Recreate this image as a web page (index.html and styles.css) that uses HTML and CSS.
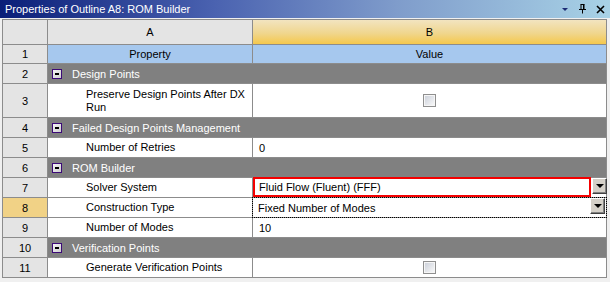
FILE: index.html
```html
<!DOCTYPE html>
<html>
<head>
<meta charset="utf-8">
<link rel="stylesheet" href="styles.css">
</head>
<body>
<div class="titlebar">
  <span class="title">Properties of Outline A8: ROM Builder</span>
  <span class="tools">
    <svg class="ic" width="8" height="6" viewBox="0 0 8 6"><polygon points="1,2 7,2 4,5" fill="#1c2c74"/></svg>
    <svg class="ic" width="9" height="10" viewBox="0 0 9 10"><path d="M2.5 0.5h4M3 0.5v5M5.5 0.5v5M6 0.5v5M1 5.5h7M4.5 5.5v4" stroke="#000" stroke-width="1" fill="none"/></svg>
    <svg class="ic" width="9" height="9" viewBox="0 0 9 9"><path d="M1 1L8 8M8 1L1 8" stroke="#000" stroke-width="1.6" fill="none"/></svg>
  </span>
</div>
<div class="grid">
  <div class="num hdr"></div>
  <div class="colhead">A</div>
  <div class="colhead sel">B</div>

  <div class="num">1</div>
  <div class="caption">Property</div>
  <div class="caption">Value</div>

  <div class="num">2</div>
  <div class="cat"><span class="tog"></span>Design Points</div>

  <div class="num tall">3</div>
  <div class="prop tall">Preserve Design Points After DX<br>Run</div>
  <div class="val center tall"><span class="chk"></span></div>

  <div class="num">4</div>
  <div class="cat"><span class="tog"></span>Failed Design Points Management</div>

  <div class="num">5</div>
  <div class="prop">Number of Retries</div>
  <div class="val">0</div>

  <div class="num">6</div>
  <div class="cat"><span class="tog"></span>ROM Builder</div>

  <div class="num">7</div>
  <div class="prop">Solver System</div>
  <div class="val combo">
    <span class="box red">Fluid Flow (Fluent) (FFF)</span>
    <span class="btn"></span>
  </div>

  <div class="num cur">8</div>
  <div class="prop">Construction Type</div>
  <div class="val combo">
    <span class="dotted"><span class="txt">Fixed Number of Modes</span><span class="btn"></span></span>
  </div>

  <div class="num">9</div>
  <div class="prop">Number of Modes</div>
  <div class="val">10</div>

  <div class="num">10</div>
  <div class="cat"><span class="tog"></span>Verification Points</div>

  <div class="num">11</div>
  <div class="prop">Generate Verification Points</div>
  <div class="val center"><span class="chk"></span></div>
</div>
</body>
</html>
```

FILE: styles.css
```css
html, body {
  margin: 0;
  padding: 0;
}
body {
  width: 610px;
  height: 282px;
  overflow: hidden;
  background: #f0f0f0;
  font-family: "Liberation Sans", Arial, sans-serif;
  font-size: 11px;
  color: #000;
}
.titlebar {
  height: 18px;
  margin-bottom: 1px;
  background: linear-gradient(to right, #0a1e78 0%, #4a62b0 35%, #7f9ccb 65%, #a8d2e6 100%);
  display: flex;
  align-items: center;
  justify-content: space-between;
  color: #fff;
}
.title {
  padding-left: 5px;
  font-size: 11px;
}
.tools {
  display: flex;
  align-items: center;
  gap: 9px;
  padding-right: 5px;
}
.ic { display: block; }
.grid {
  display: grid;
  grid-template-columns: 44px 204px 353px;
  grid-template-rows: 24px 18px 19px 33px 19px 19px 19px 19px 19px 19px 19px 19px;
  gap: 1px;
  background: #8c8c8c;
  border: 1px solid #8c8c8c;
  margin-left: 2px;
  width: max-content;
}
.grid > div {
  display: flex;
  align-items: center;
  min-width: 0;
}
.num {
  background: #e4e4e4;
  justify-content: center;
}
.num.cur { background: #f1d286; }
.colhead {
  background: #e4e4e4;
  justify-content: center;
}
.colhead.sel {
  background: linear-gradient(to bottom, #f2e4c0 0%, #f0d68e 55%, #f5c84c 100%);
}
.caption {
  background: #a6c8ee;
  justify-content: center;
}
.cat {
  grid-column: 2 / 4;
  background: #808080;
  color: #fff;
  padding-left: 4px;
}
.tog {
  width: 8px;
  height: 8px;
  border: 1px solid #3c0a78;
  background: linear-gradient(135deg, #f4f4f4, #cfcfcf);
  margin-right: 10px;
  position: relative;
  flex: none;
}
.tog::after {
  content: "";
  position: absolute;
  left: 2px;
  top: 3px;
  width: 4px;
  height: 2px;
  background: #000;
}
.prop {
  background: #fff;
  padding-left: 38px;
  line-height: 13px;
}
.val {
  background: #fff;
  padding-left: 6px;
}
.val.center {
  justify-content: center;
  padding-left: 0;
}
.chk {
  width: 11px;
  height: 11px;
  border: 1px solid #8f8f8f;
  box-shadow: inset 0 0 0 1px #f6f6f6;
  background: linear-gradient(135deg, #c9ced8, #fbfbfb);
  display: block;
}
.val.combo {
  padding-left: 0;
  align-items: stretch;
  overflow: visible;
}
.box.red {
  flex: 1;
  border: 2px solid #f40000;
  margin: -1px 0 0 0;
  padding-left: 4px;
  display: flex;
  align-items: center;
}
.btn {
  width: 13px;
  height: 14px;
  flex: none;
  background: #d4d0c8;
  border-style: solid;
  border-width: 1px;
  border-color: #fff #404040 #404040 #fff;
  box-shadow: inset -1px -1px 0 #808080;
  position: relative;
  margin-left: 1px;
  margin-right: -1px;
}
.btn::after {
  content: "";
  position: absolute;
  left: 3px;
  top: 5px;
  border-left: 4px solid transparent;
  border-right: 4px solid transparent;
  border-top: 4px solid #000;
}
.dotted {
  flex: 1;
  display: flex;
  align-items: flex-start;
  border: 1px dotted #000;
  margin: -1px;
}
.dotted .txt {
  flex: 1;
  padding-left: 5px;
  align-self: center;
}
.dotted .btn {
  margin-right: 1px;
}
```
